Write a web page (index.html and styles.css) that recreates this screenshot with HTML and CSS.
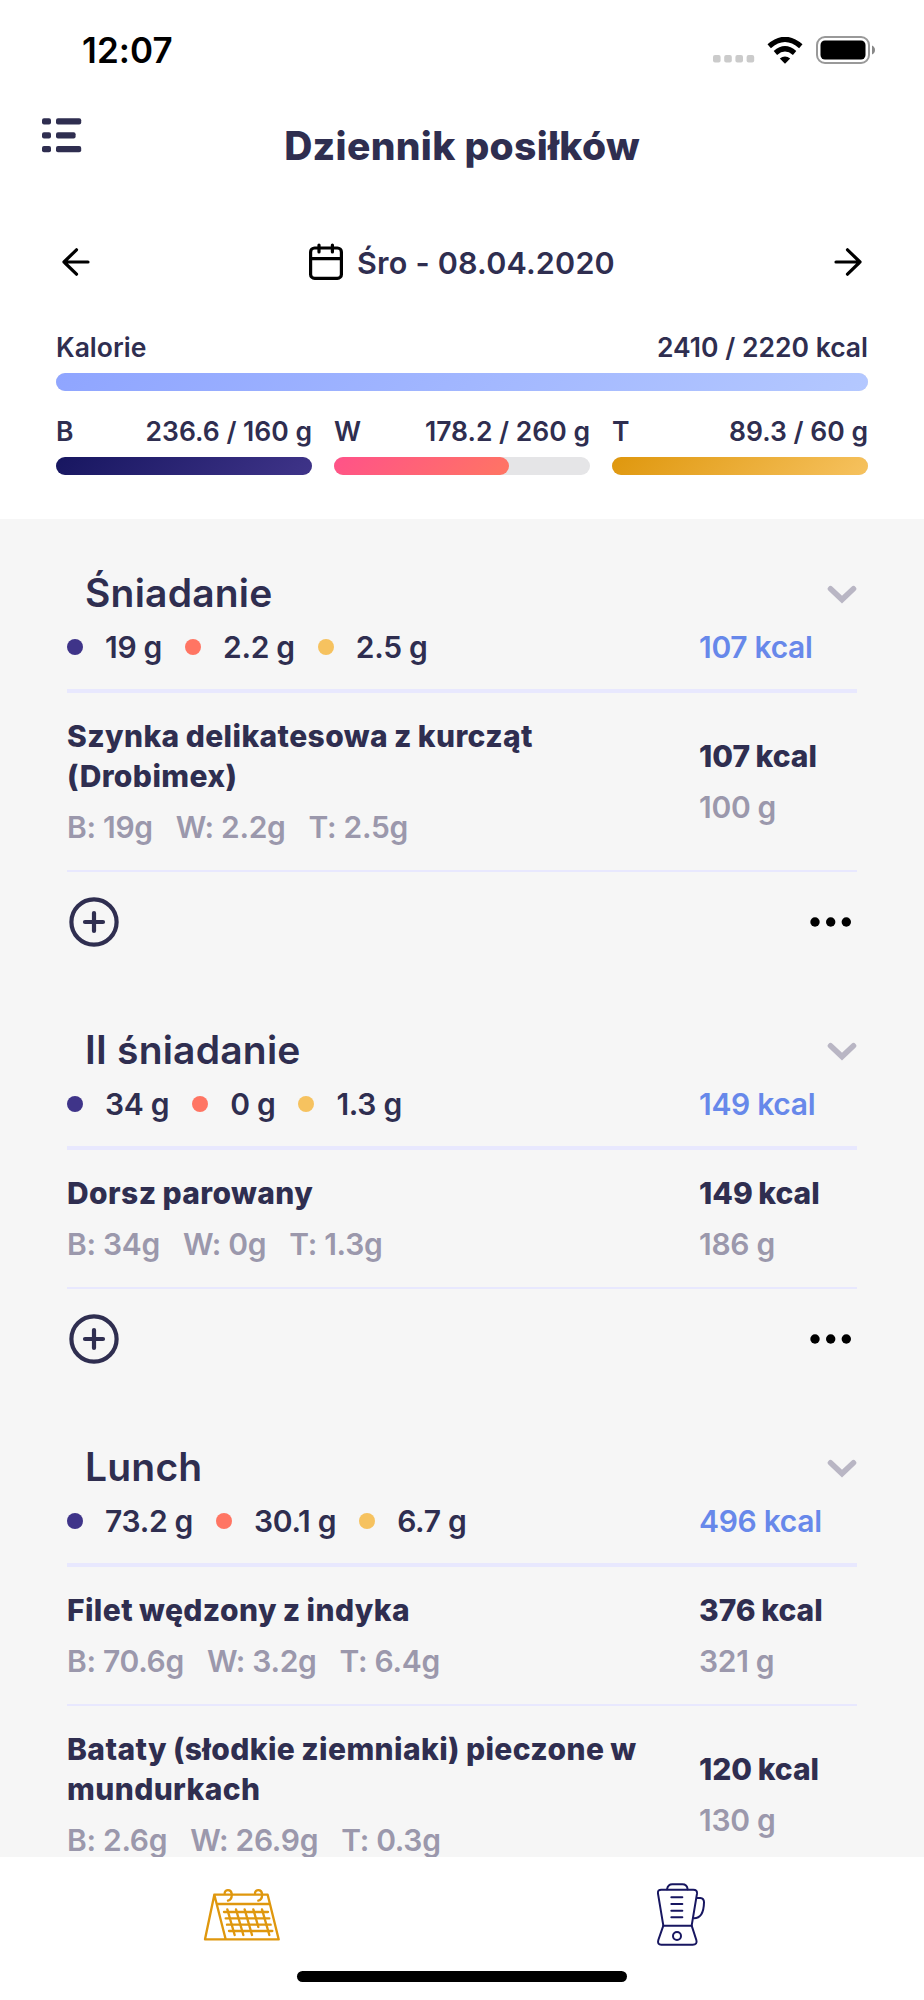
FILE: index.html
```
<!DOCTYPE html>
<html lang="pl">
<head>
  <meta charset="UTF-8">
  <meta name="viewport" content="width=device-width, initial-scale=1.0">
  <title>Dziennik posiłków</title>
  <link rel="stylesheet" href="styles.css">
</head>
<body>

<div class="status-bar">
  <span class="time">12:07</span>
  <div class="status-icons">
    <svg class="signal" width="42" height="8" viewBox="0 0 42 8" fill="#cbcbcb">
      <rect x="0" y="0" width="7.6" height="7.4" rx="2"/>
      <rect x="11.2" y="0" width="7.6" height="7.4" rx="2"/>
      <rect x="22.4" y="0" width="7.6" height="7.4" rx="2"/>
      <rect x="33.6" y="0" width="7.6" height="7.4" rx="2"/>
    </svg>
    <svg class="wifi" width="36" height="27" viewBox="0 0 36 27">
      <path d="M2.2 9.3 Q18 -4.5 33.8 9.3" fill="none" stroke="#000" stroke-width="5.2"/>
      <path d="M8.4 15.9 Q18 7.7 27.6 15.9" fill="none" stroke="#000" stroke-width="5.2"/>
      <path d="M12.8 21.6 Q18 17.2 23.2 21.6 L18 26.7 Z"/>
    </svg>
    <svg class="battery" width="61" height="28" viewBox="0 0 61 28">
      <rect x="1" y="1" width="52" height="26" rx="8" fill="none" stroke="#999" stroke-width="2"/>
      <rect x="4.5" y="4.5" width="45" height="19" rx="4.5"/>
      <path d="M56 9.5 Q59 11 59 14 Q59 17 56 18.5 Z" fill="#888"/>
    </svg>
  </div>
</div>

<header>
  <svg class="menu" width="40" height="36" viewBox="0 0 40 36" fill="#2f2e50">
    <rect x="0" y="0.2" width="9" height="6.2" rx="2"/><rect x="14" y="0.2" width="25.2" height="6.2" rx="2"/>
    <rect x="0" y="14.2" width="9" height="6.2" rx="2"/><rect x="14" y="14.2" width="19.6" height="6.2" rx="2"/>
    <rect x="0" y="28.1" width="9" height="6.2" rx="2"/><rect x="14" y="28.1" width="25.2" height="6.2" rx="2"/>
  </svg>
  <h1>Dziennik posiłków</h1>
</header>

<div class="date-nav">
  <svg width="28" height="28" viewBox="0 0 28 28" class="arrow">
    <path d="M26 14H2M14.5 1.8L2 14L14.5 26.2"/>
  </svg>
  <div class="date">
    <svg width="34" height="38" viewBox="0 0 34 38" class="calendar">
      <rect x="1.6" y="5" width="30.8" height="30.4" rx="4"/>
      <path d="M1.6 15.6H32.4M10 2V9M23.4 2V9"/>
    </svg>
    <span>Śro - 08.04.2020</span>
  </div>
  <svg width="28" height="28" viewBox="0 0 28 28" class="arrow">
    <path d="M2 14H26M13.5 1.8L26 14L13.5 26.2"/>
  </svg>
</div>

<div class="summary">
  <div class="macro">
    <div class="macro-label"><span>Kalorie</span><span>2410 / 2220 kcal</span></div>
    <div class="bar"><div class="fill kcal" style="width: 100%"></div></div>
  </div>
  <div class="macro-row">
    <div class="macro">
      <div class="macro-label"><span>B</span><span>236.6 / 160 g</span></div>
      <div class="bar"><div class="fill protein" style="width: 100%"></div></div>
    </div>
    <div class="macro">
      <div class="macro-label"><span>W</span><span>178.2 / 260 g</span></div>
      <div class="bar"><div class="fill carbs" style="width: 68.5%"></div></div>
    </div>
    <div class="macro">
      <div class="macro-label"><span>T</span><span>89.3 / 60 g</span></div>
      <div class="bar"><div class="fill fat" style="width: 100%"></div></div>
    </div>
  </div>
</div>

<main class="meals">

  <section class="meal">
    <div class="meal-title">
      <h2>Śniadanie</h2>
      <svg class="chevron" width="30" height="19" viewBox="0 0 30 19"><path d="M3.5 3.8L15 14.6L26.5 3.8"/></svg>
    </div>
    <div class="meal-totals">
      <div class="totals">
        <i class="dot protein-dot"></i><span>19 g</span>
        <i class="dot carbs-dot"></i><span>2.2 g</span>
        <i class="dot fat-dot"></i><span>2.5 g</span>
      </div>
      <span class="total-kcal">107 kcal</span>
    </div>
    <div class="product">
      <div>
        <h3>Szynka delikatesowa z kurcząt (Drobimex)</h3>
        <p class="macros"><span>B: 19g</span><span>W: 2.2g</span><span>T: 2.5g</span></p>
      </div>
      <div class="amount">
        <h3>107 kcal</h3>
        <p>100 g</p>
      </div>
    </div>
    <div class="meal-actions">
      <svg width="50" height="50" viewBox="0 0 50 50" class="add"><circle cx="25" cy="25" r="22.6"/><path d="M25 16V34M16 25H34"/></svg>
      <svg width="42" height="10" viewBox="0 0 42 10"><circle cx="5" cy="5" r="4.7"/><circle cx="20.7" cy="5" r="4.7"/><circle cx="36.3" cy="5" r="4.7"/></svg>
    </div>
  </section>

  <section class="meal">
    <div class="meal-title">
      <h2>II śniadanie</h2>
      <svg class="chevron" width="30" height="19" viewBox="0 0 30 19"><path d="M3.5 3.8L15 14.6L26.5 3.8"/></svg>
    </div>
    <div class="meal-totals">
      <div class="totals">
        <i class="dot protein-dot"></i><span>34 g</span>
        <i class="dot carbs-dot"></i><span>0 g</span>
        <i class="dot fat-dot"></i><span>1.3 g</span>
      </div>
      <span class="total-kcal">149 kcal</span>
    </div>
    <div class="product">
      <div>
        <h3>Dorsz parowany</h3>
        <p class="macros"><span>B: 34g</span><span>W: 0g</span><span>T: 1.3g</span></p>
      </div>
      <div class="amount">
        <h3>149 kcal</h3>
        <p>186 g</p>
      </div>
    </div>
    <div class="meal-actions">
      <svg width="50" height="50" viewBox="0 0 50 50" class="add"><circle cx="25" cy="25" r="22.6"/><path d="M25 16V34M16 25H34"/></svg>
      <svg width="42" height="10" viewBox="0 0 42 10"><circle cx="5" cy="5" r="4.7"/><circle cx="20.7" cy="5" r="4.7"/><circle cx="36.3" cy="5" r="4.7"/></svg>
    </div>
  </section>

  <section class="meal">
    <div class="meal-title">
      <h2>Lunch</h2>
      <svg class="chevron" width="30" height="19" viewBox="0 0 30 19"><path d="M3.5 3.8L15 14.6L26.5 3.8"/></svg>
    </div>
    <div class="meal-totals">
      <div class="totals">
        <i class="dot protein-dot"></i><span>73.2 g</span>
        <i class="dot carbs-dot"></i><span>30.1 g</span>
        <i class="dot fat-dot"></i><span>6.7 g</span>
      </div>
      <span class="total-kcal">496 kcal</span>
    </div>
    <div class="product">
      <div>
        <h3>Filet wędzony z indyka</h3>
        <p class="macros"><span>B: 70.6g</span><span>W: 3.2g</span><span>T: 6.4g</span></p>
      </div>
      <div class="amount">
        <h3>376 kcal</h3>
        <p>321 g</p>
      </div>
    </div>
    <div class="product">
      <div>
        <h3>Bataty (słodkie ziemniaki) pieczone w mundurkach</h3>
        <p class="macros"><span>B: 2.6g</span><span>W: 26.9g</span><span>T: 0.3g</span></p>
      </div>
      <div class="amount">
        <h3>120 kcal</h3>
        <p>130 g</p>
      </div>
    </div>
  </section>

</main>

<footer>
  <nav class="tabs">
    <div class="tab">
      <svg class="tab-diary" width="78" height="53" viewBox="69 115 234 159">
        <path d="M103 135H263L296 269H75ZM103 135L137 269M112 163H268"/>
        <path d="M134 131C134 118 154 118 155 132C156 143 153 151 144 153M225 131C225 118 245 118 246 132C247 143 244 151 235 153"/>
        <path d="M132 187H264M137 206H268M141 225H272M147 244H277"/>
        <path d="M142 179L164 256M168 179L190 256M194 179L216 256M220 179L235 232M246 179L268 256"/>
      </svg>
    </div>
    <div class="tab">
      <svg class="tab-blender" width="50" height="65" viewBox="80 68 150 195">
        <path d="M102 199L86 103Q84 91 96 91H192Q204 91 203 103L187 199Z"/>
        <path d="M113 90Q116 75 129 75H159Q173 75 175 90M204 116H213Q224 117 224 129Q223 177 194 177"/>
        <path d="M102 199L87 242Q83 256 96 256H190Q205 256 201 242L187 199"/>
        <path d="M126 114H159M126 134H159M126 154H159M126 174H159"/>
        <circle cx="143" cy="230" r="12"/>
      </svg>
    </div>
  </nav>
  <div class="home-indicator"></div>
</footer>

</body>
</html>
```
FILE: styles.css
```
* {
  box-sizing: border-box;
}
body {
  font-family: Inter, Roboto, sans-serif;
  margin: 0;
  height: 2000px;
  display: flex;
  flex-direction: column;
  background-color: #fff;
  color: #2f2e50;
  font-weight: 600;
  overflow: hidden;
}
h1, h2, h3, p {
  margin: 0;
}
svg {
  display: block;
  flex-shrink: 0;
}
.status-bar {
  height: 100px;
  padding: 0 47px 0 82px;
  display: flex;
  justify-content: space-between;
  align-items: center;
}
.time {
  font-size: 35px;
  color: #000;
  letter-spacing: 0.1px;
}
.status-icons {
  display: flex;
  align-items: center;
}
.signal {
  margin-top: 18px;
}
.wifi {
  margin: 0 13px 0 12px;
}
header {
  display: grid;
  grid-template-columns: 60px 1fr 60px;
  height: 92px;
  padding: 18px 42px 0;
}
h1 {
  font-size: 39px;
  line-height: 48px;
  text-align: center;
  font-weight: 800;
  margin-top: 4px;
  letter-spacing: 0.3px;
}
.date-nav {
  height: 140px;
  padding: 0 62px;
  display: flex;
  justify-content: space-between;
  align-items: center;
}
.arrow, .calendar {
  fill: none;
  stroke: #000;
  stroke-width: 3.2;
  stroke-linecap: round;
  stroke-linejoin: round;
}
.date {
  display: flex;
  align-items: center;
  gap: 14px;
  font-size: 30.5px;
  line-height: 40px;
  letter-spacing: 0.2px;
}
.date span {
  padding-top: 2px;
}
.summary {
  padding: 0 56px;
  height: 187px;
}
.macro {
  flex: 1;
}
.macro-label {
  display: flex;
  justify-content: space-between;
  font-size: 26.5px;
  line-height: 30px;
}
.bar {
  height: 18px;
  margin-top: 11px;
  border-radius: 9px;
  background-color: #e5e5e7;
}
.macro-row {
  display: flex;
  gap: 22px;
  margin-top: 25px;
}
.fill {
  height: 100%;
  border-radius: 9px;
}
.kcal {
  background: linear-gradient(135deg, #8fa5ff, #b4c8ff);
}
.protein {
  background: linear-gradient(135deg, #171660, #3f3489);
}
.carbs {
  background: linear-gradient(135deg, #ff5289, #ff7563);
}
.fat {
  background: linear-gradient(135deg, #df970d, #f6c25f);
}
.meals {
  flex: 1;
  min-height: 0;
  overflow: hidden;
  padding: 50px 67px 0;
  background-color: #f6f6f6;
}
.meal {
  margin-bottom: 54px;
}
.meal-title {
  display: flex;
  justify-content: space-between;
  align-items: center;
  padding-left: 18px;
}
h2 {
  font-size: 39px;
  line-height: 48px;
  font-weight: 600;
  letter-spacing: 0.2px;
}
.chevron {
  margin-top: 2px;
  fill: none;
  stroke: #b9b6c4;
  stroke-width: 5.6;
  stroke-linecap: round;
}
.meal-totals, .product {
  display: grid;
  grid-template-columns: 1fr 158px;
  align-items: center;
  font-size: 30px;
  line-height: 40px;
  letter-spacing: -0.3px;
}
.meal-totals {
  margin-top: 10px;
  padding-bottom: 22px;
  border-bottom: 4px solid #e8e8fe;
}
.totals {
  display: flex;
  align-items: center;
}
.totals span {
  margin-right: 23px;
}
.dot {
  width: 16px;
  height: 16px;
  margin-right: 22px;
  border-radius: 50%;
}
.protein-dot {
  background-color: #3f3489;
}
.carbs-dot {
  background-color: #ff7563;
}
.fat-dot {
  background-color: #f6c25f;
}
.total-kcal {
  color: #6788ea;
}
.product {
  padding: 23px 0;
  border-bottom: 2px solid #e8e8fe;
}
h3 {
  font-size: 30px;
  font-weight: 800;
  letter-spacing: 0.4px;
  word-spacing: -1px;
  max-width: 600px;
}
.amount h3 {
  letter-spacing: 0;
}
.product p {
  margin-top: 11px;
  color: #9b98ac;
}
.macros {
  display: flex;
  gap: 23px;
}
.meal-actions {
  height: 100px;
  padding: 0 5px 0 2px;
  display: flex;
  justify-content: space-between;
  align-items: center;
}
.add {
  fill: none;
  stroke: #2f2e50;
  stroke-width: 4.2;
  stroke-linecap: round;
}
footer {
  height: 143px;
  background-color: #fff;
}
.tabs {
  display: flex;
  height: 114px;
  padding: 0 24px 0 22px;
}
.tab {
  flex: 1;
  display: flex;
  justify-content: center;
  align-items: center;
}
.tab svg {
  fill: none;
  stroke-width: 6;
  stroke-linecap: round;
  stroke-linejoin: round;
}
.tab .tab-diary {
  stroke: #df970d;
  stroke-width: 7;
}
.tab .tab-blender {
  stroke: #171660;
}
.home-indicator {
  width: 330px;
  height: 11px;
  margin: 0 auto;
  border-radius: 6px;
  background-color: #000;
}
```
